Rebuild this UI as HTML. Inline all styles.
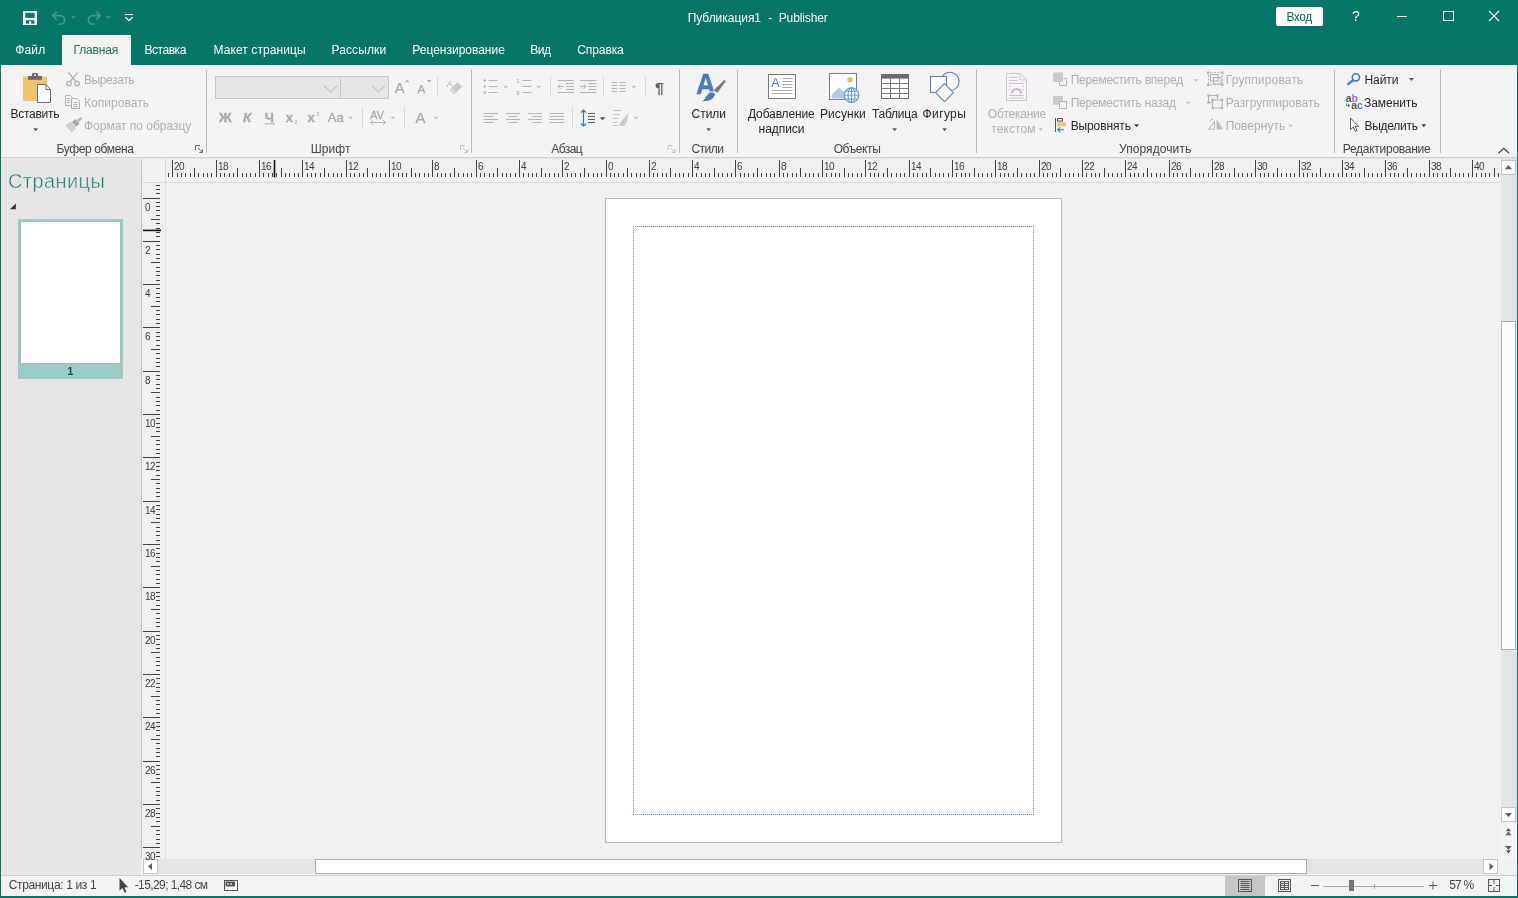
<!DOCTYPE html>
<html lang="ru"><head><meta charset="utf-8"><title>Публикация1 - Publisher</title>
<style>
html,body{margin:0;padding:0}
body{width:1518px;height:898px;overflow:hidden;background:#077568;font-family:"Liberation Sans",sans-serif;font-size:12px;position:relative}
.b{position:absolute}
.t{position:absolute;white-space:pre;line-height:30px;height:30px;font-size:12px}
.g{position:absolute;white-space:pre;line-height:30px;height:30px}
.rl{position:absolute;white-space:pre;font-size:10px;line-height:10px;color:#3c3c3c;letter-spacing:-0.5px}
svg{position:absolute;left:0;top:0}
#hd{position:absolute;left:8px;top:166px;font-size:20px;line-height:30px;color:#1f7c75;white-space:pre;letter-spacing:0.42px;-webkit-text-stroke:0.45px #e6e6e6}
</style></head><body>
<div class="b" style="left:1px;top:65px;width:1516px;height:92px;background:#f3f3f3"></div>
<div class="b" style="left:1px;top:157px;width:1516px;height:1px;background:#cecece"></div>
<div class="b" style="left:1px;top:65px;width:1516px;height:1px;background:#e4f6f4"></div>
<div class="b" style="left:62px;top:35px;width:69px;height:31px;background:#f3f3f3"></div>
<div class="b" style="left:1px;top:158px;width:140px;height:717px;background:#e6e6e6"></div>
<div class="b" style="left:141px;top:158px;width:1376px;height:717px;background:#f0f0f0"></div>
<div class="b" style="left:141px;top:158px;width:1px;height:701px;background:#c4c4c4"></div>
<div class="b" style="left:165px;top:182px;width:1px;height:677px;background:#dddddd"></div>
<div class="b" style="left:141px;top:158px;width:1360px;height:1px;background:#e6e6e6"></div>
<div class="b" style="left:166px;top:179px;width:1334px;height:1px;background:#fafafa"></div>
<div class="b" style="left:141px;top:182px;width:1360px;height:1px;background:#d9d9d9"></div>
<div class="b" style="left:165px;top:158px;width:1px;height:24px;background:#d9d9d9"></div>
<div class="b" style="left:1501px;top:158px;width:16px;height:664px;background:#e4e4e4"></div>
<div class="b" style="left:1501px;top:822px;width:16px;height:37px;background:#f4f4f4"></div>
<div class="b" style="left:143px;top:859px;width:1355px;height:15px;background:#e4e4e4"></div>
<div class="b" style="left:1px;top:876px;width:1516px;height:20px;background:#f3f3f3"></div>
<div class="b" style="left:1px;top:875px;width:1516px;height:1px;background:#cfcfcf"></div>
<svg width="1518" height="898" viewBox="0 0 1518 898">
<g id="qat">
<rect x="23" y="11" width="14" height="14" fill="#fff"/>
<rect x="25.3" y="12.8" width="9.4" height="5" fill="#077568"/>
<rect x="26" y="20.2" width="8.4" height="3.5" fill="#077568"/>
<rect x="29.2" y="21.2" width="2" height="3.8" fill="#fff"/>
<path d="M56.8 11.8 L52.6 15.6 L56.8 19.6 M52.8 15.6 H60.3 a4.3 4.3 0 0 1 0 8.6 H58.5" fill="none" stroke="#3f988c" stroke-width="1.7"/>
<polygon points="71.3,16.3 75.9,16.3 73.6,18.7" fill="#3f988c"/>
<path d="M96.2 11.8 L100.4 15.6 L96.2 19.6 M100.2 15.6 H92.7 a4.3 4.3 0 0 0 0 8.6 H94.5" fill="none" stroke="#3f988c" stroke-width="1.7"/>
<polygon points="106,16.3 110.7,16.3 108.35,18.7" fill="#3f988c"/>
<rect x="125" y="14" width="8" height="1.1" fill="#fff"/>
<path d="M125.4 17.2 L129 20.6 L132.6 17.2" fill="none" stroke="#fff" stroke-width="1.3"/>
</g>
<rect x="1276" y="7" width="47" height="19" rx="2" fill="#fff"/>
<rect x="1397" y="16" width="10" height="1" fill="#fff"/>
<rect x="1443.5" y="11.5" width="10" height="9" fill="none" stroke="#fff" stroke-width="1"/>
<path d="M1489 11 L1499 21 M1499 11 L1489 21" stroke="#fff" stroke-width="1.1" fill="none"/>
<rect x="206.0" y="70" width="1" height="83" fill="#b9b9b9"/>
<rect x="471.0" y="70" width="1" height="83" fill="#b9b9b9"/>
<rect x="679.0" y="70" width="1" height="83" fill="#b9b9b9"/>
<rect x="737.0" y="70" width="1" height="83" fill="#b9b9b9"/>
<rect x="976.0" y="70" width="1" height="83" fill="#b9b9b9"/>
<rect x="1334.0" y="70" width="1" height="83" fill="#b9b9b9"/>
<rect x="1440.0" y="70" width="1" height="83" fill="#b9b9b9"/>
<rect x="437.0" y="77" width="1" height="19" fill="#dadada"/>
<rect x="550.0" y="76" width="1" height="20" fill="#dadada"/>
<rect x="603.0" y="76" width="1" height="20" fill="#dadada"/>
<rect x="645.0" y="76" width="1" height="20" fill="#dadada"/>
<rect x="362.0" y="107" width="1" height="21" fill="#dadada"/>
<rect x="404.0" y="107" width="1" height="21" fill="#dadada"/>
<rect x="572.0" y="107" width="1" height="21" fill="#dadada"/>
<g id="paste">
<rect x="23" y="76.4" width="24" height="24.6" rx="0.8" fill="#efc46f"/>
<rect x="28" y="76" width="14" height="3.8" fill="#6b6b6b"/>
<rect x="32" y="73" width="6" height="4" rx="1" fill="#6b6b6b"/>
<rect x="34.1" y="74.3" width="1.8" height="1.7" fill="#f0e2c0"/>
<path d="M37.5 84.5 H46 L50.5 89.5 V102.5 H37.5 Z" fill="#fff" stroke="#6b6b6b" stroke-width="1"/>
<path d="M46 84.5 V89.5 H50.5" fill="none" stroke="#6b6b6b" stroke-width="1"/>
</g>
<polygon points="33.2,128.3 38,128.3 35.6,131.2" fill="#5a5a5a"/>
<g fill="none" stroke="#b3b3b3" stroke-width="1.3"><path d="M68.3 72.3 L76.3 82 M77.7 72.3 L69.7 82"/><circle cx="69" cy="83.5" r="2.2"/><circle cx="77" cy="83.5" r="2.2"/></g>
<g fill="none" stroke="#b3b3b3" stroke-width="1"><path d="M71 105.5 H65.5 V95.5 H70.5 L72.5 97.5 V98"/><path d="M67 98.5 H70 M67 100.5 H70 M67 102.5 H70"/><path d="M71.5 98.5 H77 L79.5 101 V108.5 H71.5 Z" fill="#f3f3f3"/><path d="M73.5 102.5 H77.5 M73.5 104.5 H77.5 M73.5 106.5 H77.5"/></g>
<g transform="translate(74,124.3) rotate(49)"><rect x="-1.4" y="-10" width="2.8" height="5.5" fill="#bdbdbd"/><rect x="-3.2" y="-4.5" width="6.4" height="4.5" fill="#a9a9a9"/><rect x="-4.6" y="0.8" width="9.2" height="6.5" fill="#cfcfcf"/></g>
<g fill="none" stroke="#6a6a6a" stroke-width="1"><path d="M195.5 150 V145.5 H200"/><path d="M198 148 L202.5 152.5 M202.5 149.3 V152.5 H199.3"/></g>
<g fill="none" stroke="#c0c0c0" stroke-width="1"><path d="M460.5 150 V145.5 H465"/><path d="M463 148 L467.5 152.5 M467.5 149.3 V152.5 H464.3"/></g>
<g fill="none" stroke="#c0c0c0" stroke-width="1"><path d="M668.0 150 V145.5 H672.5"/><path d="M670.5 148 L675.0 152.5 M675.0 149.3 V152.5 H671.8"/></g>
<rect x="215.5" y="76.5" width="125" height="22" fill="#e5e5e5" stroke="#c8c8c8"/>
<rect x="340.5" y="76.5" width="48" height="22" fill="#e5e5e5" stroke="#c8c8c8"/>
<path d="M323.5 85.5 L330.5 92 L337.5 85.5 M372 85.5 L378.5 92 L385 85.5" fill="none" stroke="#b3b3b3" stroke-width="1"/>
<polygon points="405,82.2 407.3,79.5 409.6,82.2" fill="#b3b3b3"/>
<polygon points="426.6,80 431.6,80 429.1,82.8" fill="#b3b3b3"/>
<g transform="translate(455.800,88.400) rotate(-45)"><rect x="-5.500" y="-3.200" width="11" height="6.400" fill="#c9c3c6"/><rect x="-5.500" y="-3.200" width="3.500" height="6.400" fill="#dcd8da"/></g>
<rect x="264.5" y="123.2" width="10.5" height="1.3" fill="#b3b3b3"/>
<polygon points="348.3,116.8 353,116.8 350.65,119.4" fill="#c4c4c4"/>
<path d="M370.5 122.5 H385.5 M373 120 L370.5 122.5 L373 125 M383 120 L385.5 122.5 L383 125" fill="none" stroke="#b3b3b3" stroke-width="1"/>
<polygon points="390.6,116.8 395.2,116.8 392.9,119.4" fill="#c4c4c4"/>
<polygon points="433.6,116.8 438.4,116.8 436.0,119.4" fill="#c4c4c4"/>
<g fill="none" stroke="#b3b3b3" stroke-width="1"><circle cx="484.8" cy="80.5" r="1.2" fill="#b3b3b3" stroke="none"/><path d="M488.5 80.5 H497.5"/><path d="M522.5 80.5 H531.5"/><circle cx="484.8" cy="86.5" r="1.2" fill="#b3b3b3" stroke="none"/><path d="M488.5 86.5 H497.5"/><path d="M522.5 86.5 H531.5"/><circle cx="484.8" cy="92.5" r="1.2" fill="#b3b3b3" stroke="none"/><path d="M488.5 92.5 H497.5"/><path d="M522.5 92.5 H531.5"/><path d="M557.5 80.5 H574 M580 80.5 H596.5"/><path d="M557.5 92.5 H574 M580 92.5 H596.5"/><path d="M566 83.5 H574 M588.5 83.5 H596.5"/><path d="M566 86.5 H574 M588.5 86.5 H596.5"/><path d="M566 89.5 H574 M588.5 89.5 H596.5"/><path d="M558 86.5 H564 M560.5 84 L558 86.5 L560.5 89"/><path d="M580 86.5 H586 M583.5 84 L586 86.5 L583.5 89"/><path d="M611.5 82.5 H617.5 M619.5 82.5 H625.5"/><path d="M611.5 85.5 H617.5 M619.5 85.5 H625.5"/><path d="M611.5 88.5 H617.5 M619.5 88.5 H625.5"/><path d="M611.5 91.5 H617.5 M619.5 91.5 H625.5"/><path d="M483.5 113.5 H498"/><path d="M506 113.5 H520"/><path d="M528 113.5 H542"/><path d="M549.5 113.5 H564"/><path d="M483.5 116.5 H493.5"/><path d="M508.5 116.5 H517.5"/><path d="M532.5 116.5 H542"/><path d="M549.5 116.5 H564"/><path d="M483.5 119.5 H498"/><path d="M506 119.5 H520"/><path d="M528 119.5 H542"/><path d="M549.5 119.5 H564"/><path d="M483.5 122.5 H493.5"/><path d="M508.5 122.5 H517.5"/><path d="M532.5 122.5 H542"/><path d="M549.5 122.5 H564"/></g>
<polygon points="503.3,86 508,86 505.65,88.6" fill="#c4c4c4"/>
<polygon points="536.5,86 541,86 538.75,88.6" fill="#c4c4c4"/>
<polygon points="631.5,86 636,86 633.75,88.6" fill="#c4c4c4"/>
<g fill="none" stroke-width="1"><path d="M583.5 110 V126 M581 112.5 L583.5 110 L586 112.5 M581 123.5 L583.5 126 L586 123.5" stroke="#3e74b0" stroke-width="1.2"/><path d="M588 113.5 H595 M588 116.5 H595 M588 119.5 H595 M588 122.5 H595" stroke="#5a5a5a"/></g>
<polygon points="600,117.2 605.2,117.2 602.6,120.2" fill="#444"/>
<g fill="none" stroke="#c4c4c4" stroke-width="1"><path d="M613.5 110.500 H621 M613 114.5 H620 M613 118.5 H618.5 M613 122.5 H617 M613 125.5 H618"/><path d="M628.5 112.5 L621 122 L618.5 125.8 L624 125.8 L626.8 122.500 Z" fill="#c9c9c9" stroke="none"/></g>
<polygon points="633.5,116.8 638.2,116.8 635.85,119.4" fill="#c4c4c4"/>
<polygon points="706.3,128.3 711,128.3 708.65,131.2" fill="#5a5a5a"/>
<rect x="768.5" y="74.5" width="27" height="24" fill="#fff" stroke="#7a7a7a"/>
<path d="M782.5 78.5 H792.5 M782.5 81.5 H792.5 M782.5 84.5 H792.5 M782.5 87.5 H792.5 M771.5 90.5 H792.5 M771.5 93.5 H792.5" stroke="#a8a8a8" stroke-width="1" fill="none"/>
<rect x="829.5" y="73.5" width="27" height="26" fill="#fff" stroke="#7a7a7a"/>
<circle cx="850" cy="79.8" r="2.7" fill="#e9bd6b"/>
<path d="M831.5 98.5 V95 L838.9 87.300 L843.5 91.500 L846 89.8 L850 93 V98.5 Z" fill="#b7c9e2"/>
<g fill="none" stroke="#6494cb" stroke-width="0.9"><circle cx="851.5" cy="95.2" r="7.300" fill="#f3f7fc" stroke-width="1.15"/><path d="M844.2 95.2 H858.8 M851.5 87.9 V102.5 M845.6 91.300 H857.4 M845.6 99.1 H857.4"/><ellipse cx="851.5" cy="95.2" rx="3.4" ry="7.300"/></g>
<rect x="881.5" y="74.5" width="27" height="24" fill="#fff" stroke="#6b6b6b"/>
<rect x="881" y="74" width="28" height="4.6" fill="#6b6b6b"/>
<path d="M890.5 78.5 V98.5 M899.5 78.5 V98.5 M881.5 83.5 H908.5 M881.5 88.5 H908.5 M881.5 93.5 H908.5" stroke="#7a7a7a" stroke-width="1" fill="none"/>
<polygon points="892.2,128.3 897,128.3 894.6,131.2" fill="#5a5a5a"/>
<g fill="#f9fbfe" stroke="#5f82b0" stroke-width="1.1"><circle cx="950" cy="81.4" r="9.1"/><rect x="930.5" y="76.500" width="16" height="16"/><path d="M944.5 83.6 L953.3 92.600 L944.5 101.600 L935.7 92.600 Z"/></g>
<polygon points="942.2,128.3 947,128.3 944.6,131.2" fill="#5a5a5a"/>
<g fill="none" stroke="#cbc5cb" stroke-width="1"><path d="M1006.5 73.500 H1020 L1026.5 80 V100.5 H1006.5 Z" fill="#f6f4f6"/><path d="M1020 73.5 V80 H1026.5"/><path d="M1009 77.5 H1017.5 M1009 80.5 H1017.500 M1009 83.5 H1024 M1009 86.5 H1011 M1022 86.5 H1024 M1009 89.5 H1010.5 M1022.5 89.5 H1024 M1009 95.5 H1024 M1009 98 H1024"/><path d="M1012 93.5 A4.5 4.5 0 0 1 1021 93.500" stroke-width="2.2" stroke="#c4bcc4"/></g>
<polygon points="1038.3,128.3 1043,128.3 1040.65,131" fill="#c4c4c4"/>
<rect x="1053" y="72.500" width="10" height="9.4" fill="#cacaca"/><path d="M1063.500 78.500 H1066.5 V85.5 H1059.5 V82.4" fill="none" stroke="#b3b3b3"/>
<rect x="1053" y="96" width="10" height="8.8" fill="#cacaca"/><rect x="1059.5" y="101.5" width="7" height="7" fill="#f3f3f3" stroke="#b3b3b3"/>
<polygon points="1193.7,79.2 1198.7,79.2 1196.2,82" fill="#c4c4c4"/>
<polygon points="1185.8,101.7 1190.8,101.7 1188.3,104.5" fill="#c4c4c4"/>
<path d="M1055.5 118 V132" stroke="#555" fill="none"/><rect x="1057.5" y="118.5" width="5" height="2.5" fill="#fff" stroke="#555"/><rect x="1057" y="122.200" width="9" height="4.2" fill="#e8c77a"/><path d="M1057.800 129.700 H1064 M1060.200 127.300 L1057.800 129.700 L1060.200 132.100" fill="none" stroke="#3e74b0" stroke-width="1.1"/>
<polygon points="1134,124.2 1139.2,124.2 1136.6,127.2" fill="#444"/>
<g fill="none" stroke="#b3b3b3" stroke-width="1"><rect x="1210.500" y="74.5" width="7.5" height="6.5"/><rect x="1213.5" y="77.500" width="7.5" height="6.5"/><path d="M1208.5 75 V83 M1222.500 75 V83 M1210.500 72.500 H1220.500 M1210.500 84.5 H1220.500" stroke-dasharray="2 1.500"/></g>
<rect x="1207" y="71.5" width="2.5" height="2.500" fill="#b3b3b3"/>
<rect x="1221" y="71.5" width="2.5" height="2.500" fill="#b3b3b3"/>
<rect x="1207" y="83.5" width="2.5" height="2.500" fill="#b3b3b3"/>
<rect x="1221" y="83.5" width="2.5" height="2.500" fill="#b3b3b3"/>
<g fill="none" stroke="#b3b3b3" stroke-width="1"><rect x="1208.500" y="95.5" width="9" height="7"/><rect x="1212.500" y="100" width="9.5" height="8" fill="#f3f3f3"/></g>
<rect x="1207.3" y="94.3" width="2.4" height="2.400" fill="#b3b3b3"/>
<rect x="1216.3" y="94.3" width="2.4" height="2.400" fill="#b3b3b3"/>
<rect x="1207.3" y="101.3" width="2.4" height="2.400" fill="#b3b3b3"/>
<rect x="1211.3" y="98.8" width="2.4" height="2.400" fill="#b3b3b3"/>
<rect x="1220.8" y="98.8" width="2.4" height="2.400" fill="#b3b3b3"/>
<rect x="1211.3" y="106.8" width="2.4" height="2.400" fill="#b3b3b3"/>
<rect x="1220.8" y="106.8" width="2.4" height="2.400" fill="#b3b3b3"/>
<path d="M1208.500 129.200 H1214.500 V121.500 Z" fill="none" stroke="#b3b3b3"/><path d="M1216.500 118.700 V129.600 H1223.200 Z" fill="#bdbdbd"/><path d="M1209.500 121.500 A4 4 0 0 1 1213 119.200" fill="none" stroke="#b3b3b3"/>
<polygon points="1288,124.5 1293,124.5 1290.5,127.3" fill="#c4c4c4"/>
<path d="M1353.200 80.200 L1348.200 84" stroke="#5c7fa8" stroke-width="2.6" stroke-linecap="round" fill="none"/><circle cx="1355.900" cy="77.300" r="3.600" fill="#eef3fa" stroke="#4a78b0" stroke-width="1.600"/>
<polygon points="1408.9,78 1414,78 1411.45,81" fill="#5a5a5a"/>
<path d="M1346.500 103.500 V105.500 H1349.500 M1348 104 L1349.800 105.500 L1348 107" fill="none" stroke="#4a78b0" stroke-width="1"/>
<path d="M1350.500 118 V129.600 L1353.300 127.100 L1355.300 131.400 L1357.100 130.600 L1355.100 126.400 H1358.600 Z" fill="#fff" stroke="#555" stroke-width="1"/>
<polygon points="1421.4,124.2 1426.3,124.2 1423.85,127.2" fill="#444"/>
<path d="M1498.500 153.200 L1503.800 148.200 L1509.100 153.200" fill="none" stroke="#444" stroke-width="1.200"/>
<polygon points="15.8,203.400 15.8,209.200 10,209.200" fill="#333"/>
<rect x="18" y="219" width="105" height="160" fill="#9ccbc6"/>
<rect x="20.500" y="221.500" width="100" height="142" fill="#fff" stroke="#a3bcb9"/>
<g fill="#404040"><rect x="168" y="173" width="1" height="4"/><rect x="172" y="160" width="1" height="17"/><rect x="177" y="173" width="1" height="4"/><rect x="181" y="173" width="1" height="4"/><rect x="185" y="173" width="1" height="4"/><rect x="190" y="173" width="1" height="4"/><rect x="194" y="168" width="1" height="9"/><rect x="198" y="173" width="1" height="4"/><rect x="203" y="173" width="1" height="4"/><rect x="207" y="173" width="1" height="4"/><rect x="211" y="173" width="1" height="4"/><rect x="216" y="160" width="1" height="17"/><rect x="220" y="173" width="1" height="4"/><rect x="224" y="173" width="1" height="4"/><rect x="229" y="173" width="1" height="4"/><rect x="233" y="173" width="1" height="4"/><rect x="237" y="168" width="1" height="9"/><rect x="242" y="173" width="1" height="4"/><rect x="246" y="173" width="1" height="4"/><rect x="250" y="173" width="1" height="4"/><rect x="255" y="173" width="1" height="4"/><rect x="259" y="160" width="1" height="17"/><rect x="263" y="173" width="1" height="4"/><rect x="268" y="173" width="1" height="4"/><rect x="272" y="173" width="1" height="4"/><rect x="276" y="173" width="1" height="4"/><rect x="281" y="168" width="1" height="9"/><rect x="285" y="173" width="1" height="4"/><rect x="289" y="173" width="1" height="4"/><rect x="294" y="173" width="1" height="4"/><rect x="298" y="173" width="1" height="4"/><rect x="302" y="160" width="1" height="17"/><rect x="307" y="173" width="1" height="4"/><rect x="311" y="173" width="1" height="4"/><rect x="315" y="173" width="1" height="4"/><rect x="320" y="173" width="1" height="4"/><rect x="324" y="168" width="1" height="9"/><rect x="328" y="173" width="1" height="4"/><rect x="333" y="173" width="1" height="4"/><rect x="337" y="173" width="1" height="4"/><rect x="341" y="173" width="1" height="4"/><rect x="346" y="160" width="1" height="17"/><rect x="350" y="173" width="1" height="4"/><rect x="354" y="173" width="1" height="4"/><rect x="359" y="173" width="1" height="4"/><rect x="363" y="173" width="1" height="4"/><rect x="367" y="168" width="1" height="9"/><rect x="372" y="173" width="1" height="4"/><rect x="376" y="173" width="1" height="4"/><rect x="380" y="173" width="1" height="4"/><rect x="385" y="173" width="1" height="4"/><rect x="389" y="160" width="1" height="17"/><rect x="393" y="173" width="1" height="4"/><rect x="398" y="173" width="1" height="4"/><rect x="402" y="173" width="1" height="4"/><rect x="406" y="173" width="1" height="4"/><rect x="411" y="168" width="1" height="9"/><rect x="415" y="173" width="1" height="4"/><rect x="419" y="173" width="1" height="4"/><rect x="424" y="173" width="1" height="4"/><rect x="428" y="173" width="1" height="4"/><rect x="432" y="160" width="1" height="17"/><rect x="437" y="173" width="1" height="4"/><rect x="441" y="173" width="1" height="4"/><rect x="445" y="173" width="1" height="4"/><rect x="450" y="173" width="1" height="4"/><rect x="454" y="168" width="1" height="9"/><rect x="458" y="173" width="1" height="4"/><rect x="463" y="173" width="1" height="4"/><rect x="467" y="173" width="1" height="4"/><rect x="471" y="173" width="1" height="4"/><rect x="476" y="160" width="1" height="17"/><rect x="480" y="173" width="1" height="4"/><rect x="484" y="173" width="1" height="4"/><rect x="489" y="173" width="1" height="4"/><rect x="493" y="173" width="1" height="4"/><rect x="497" y="168" width="1" height="9"/><rect x="502" y="173" width="1" height="4"/><rect x="506" y="173" width="1" height="4"/><rect x="510" y="173" width="1" height="4"/><rect x="515" y="173" width="1" height="4"/><rect x="519" y="160" width="1" height="17"/><rect x="523" y="173" width="1" height="4"/><rect x="528" y="173" width="1" height="4"/><rect x="532" y="173" width="1" height="4"/><rect x="536" y="173" width="1" height="4"/><rect x="541" y="168" width="1" height="9"/><rect x="545" y="173" width="1" height="4"/><rect x="549" y="173" width="1" height="4"/><rect x="554" y="173" width="1" height="4"/><rect x="558" y="173" width="1" height="4"/><rect x="562" y="160" width="1" height="17"/><rect x="567" y="173" width="1" height="4"/><rect x="571" y="173" width="1" height="4"/><rect x="575" y="173" width="1" height="4"/><rect x="580" y="173" width="1" height="4"/><rect x="584" y="168" width="1" height="9"/><rect x="588" y="173" width="1" height="4"/><rect x="593" y="173" width="1" height="4"/><rect x="597" y="173" width="1" height="4"/><rect x="601" y="173" width="1" height="4"/><rect x="606" y="160" width="1" height="17"/><rect x="610" y="173" width="1" height="4"/><rect x="614" y="173" width="1" height="4"/><rect x="618" y="173" width="1" height="4"/><rect x="623" y="173" width="1" height="4"/><rect x="627" y="168" width="1" height="9"/><rect x="631" y="173" width="1" height="4"/><rect x="636" y="173" width="1" height="4"/><rect x="640" y="173" width="1" height="4"/><rect x="644" y="173" width="1" height="4"/><rect x="649" y="160" width="1" height="17"/><rect x="653" y="173" width="1" height="4"/><rect x="657" y="173" width="1" height="4"/><rect x="662" y="173" width="1" height="4"/><rect x="666" y="173" width="1" height="4"/><rect x="670" y="168" width="1" height="9"/><rect x="675" y="173" width="1" height="4"/><rect x="679" y="173" width="1" height="4"/><rect x="683" y="173" width="1" height="4"/><rect x="688" y="173" width="1" height="4"/><rect x="692" y="160" width="1" height="17"/><rect x="696" y="173" width="1" height="4"/><rect x="701" y="173" width="1" height="4"/><rect x="705" y="173" width="1" height="4"/><rect x="709" y="173" width="1" height="4"/><rect x="714" y="168" width="1" height="9"/><rect x="718" y="173" width="1" height="4"/><rect x="722" y="173" width="1" height="4"/><rect x="727" y="173" width="1" height="4"/><rect x="731" y="173" width="1" height="4"/><rect x="735" y="160" width="1" height="17"/><rect x="740" y="173" width="1" height="4"/><rect x="744" y="173" width="1" height="4"/><rect x="748" y="173" width="1" height="4"/><rect x="753" y="173" width="1" height="4"/><rect x="757" y="168" width="1" height="9"/><rect x="761" y="173" width="1" height="4"/><rect x="766" y="173" width="1" height="4"/><rect x="770" y="173" width="1" height="4"/><rect x="774" y="173" width="1" height="4"/><rect x="779" y="160" width="1" height="17"/><rect x="783" y="173" width="1" height="4"/><rect x="787" y="173" width="1" height="4"/><rect x="792" y="173" width="1" height="4"/><rect x="796" y="173" width="1" height="4"/><rect x="800" y="168" width="1" height="9"/><rect x="805" y="173" width="1" height="4"/><rect x="809" y="173" width="1" height="4"/><rect x="813" y="173" width="1" height="4"/><rect x="818" y="173" width="1" height="4"/><rect x="822" y="160" width="1" height="17"/><rect x="826" y="173" width="1" height="4"/><rect x="831" y="173" width="1" height="4"/><rect x="835" y="173" width="1" height="4"/><rect x="839" y="173" width="1" height="4"/><rect x="844" y="168" width="1" height="9"/><rect x="848" y="173" width="1" height="4"/><rect x="852" y="173" width="1" height="4"/><rect x="857" y="173" width="1" height="4"/><rect x="861" y="173" width="1" height="4"/><rect x="865" y="160" width="1" height="17"/><rect x="870" y="173" width="1" height="4"/><rect x="874" y="173" width="1" height="4"/><rect x="878" y="173" width="1" height="4"/><rect x="883" y="173" width="1" height="4"/><rect x="887" y="168" width="1" height="9"/><rect x="891" y="173" width="1" height="4"/><rect x="896" y="173" width="1" height="4"/><rect x="900" y="173" width="1" height="4"/><rect x="904" y="173" width="1" height="4"/><rect x="909" y="160" width="1" height="17"/><rect x="913" y="173" width="1" height="4"/><rect x="917" y="173" width="1" height="4"/><rect x="922" y="173" width="1" height="4"/><rect x="926" y="173" width="1" height="4"/><rect x="930" y="168" width="1" height="9"/><rect x="935" y="173" width="1" height="4"/><rect x="939" y="173" width="1" height="4"/><rect x="943" y="173" width="1" height="4"/><rect x="948" y="173" width="1" height="4"/><rect x="952" y="160" width="1" height="17"/><rect x="956" y="173" width="1" height="4"/><rect x="961" y="173" width="1" height="4"/><rect x="965" y="173" width="1" height="4"/><rect x="969" y="173" width="1" height="4"/><rect x="974" y="168" width="1" height="9"/><rect x="978" y="173" width="1" height="4"/><rect x="982" y="173" width="1" height="4"/><rect x="987" y="173" width="1" height="4"/><rect x="991" y="173" width="1" height="4"/><rect x="995" y="160" width="1" height="17"/><rect x="1000" y="173" width="1" height="4"/><rect x="1004" y="173" width="1" height="4"/><rect x="1008" y="173" width="1" height="4"/><rect x="1013" y="173" width="1" height="4"/><rect x="1017" y="168" width="1" height="9"/><rect x="1021" y="173" width="1" height="4"/><rect x="1026" y="173" width="1" height="4"/><rect x="1030" y="173" width="1" height="4"/><rect x="1034" y="173" width="1" height="4"/><rect x="1039" y="160" width="1" height="17"/><rect x="1043" y="173" width="1" height="4"/><rect x="1047" y="173" width="1" height="4"/><rect x="1052" y="173" width="1" height="4"/><rect x="1056" y="173" width="1" height="4"/><rect x="1060" y="168" width="1" height="9"/><rect x="1065" y="173" width="1" height="4"/><rect x="1069" y="173" width="1" height="4"/><rect x="1073" y="173" width="1" height="4"/><rect x="1078" y="173" width="1" height="4"/><rect x="1082" y="160" width="1" height="17"/><rect x="1086" y="173" width="1" height="4"/><rect x="1091" y="173" width="1" height="4"/><rect x="1095" y="173" width="1" height="4"/><rect x="1099" y="173" width="1" height="4"/><rect x="1104" y="168" width="1" height="9"/><rect x="1108" y="173" width="1" height="4"/><rect x="1112" y="173" width="1" height="4"/><rect x="1117" y="173" width="1" height="4"/><rect x="1121" y="173" width="1" height="4"/><rect x="1125" y="160" width="1" height="17"/><rect x="1130" y="173" width="1" height="4"/><rect x="1134" y="173" width="1" height="4"/><rect x="1138" y="173" width="1" height="4"/><rect x="1143" y="173" width="1" height="4"/><rect x="1147" y="168" width="1" height="9"/><rect x="1151" y="173" width="1" height="4"/><rect x="1156" y="173" width="1" height="4"/><rect x="1160" y="173" width="1" height="4"/><rect x="1164" y="173" width="1" height="4"/><rect x="1169" y="160" width="1" height="17"/><rect x="1173" y="173" width="1" height="4"/><rect x="1177" y="173" width="1" height="4"/><rect x="1182" y="173" width="1" height="4"/><rect x="1186" y="173" width="1" height="4"/><rect x="1190" y="168" width="1" height="9"/><rect x="1195" y="173" width="1" height="4"/><rect x="1199" y="173" width="1" height="4"/><rect x="1203" y="173" width="1" height="4"/><rect x="1208" y="173" width="1" height="4"/><rect x="1212" y="160" width="1" height="17"/><rect x="1216" y="173" width="1" height="4"/><rect x="1221" y="173" width="1" height="4"/><rect x="1225" y="173" width="1" height="4"/><rect x="1229" y="173" width="1" height="4"/><rect x="1234" y="168" width="1" height="9"/><rect x="1238" y="173" width="1" height="4"/><rect x="1242" y="173" width="1" height="4"/><rect x="1247" y="173" width="1" height="4"/><rect x="1251" y="173" width="1" height="4"/><rect x="1255" y="160" width="1" height="17"/><rect x="1260" y="173" width="1" height="4"/><rect x="1264" y="173" width="1" height="4"/><rect x="1268" y="173" width="1" height="4"/><rect x="1273" y="173" width="1" height="4"/><rect x="1277" y="168" width="1" height="9"/><rect x="1281" y="173" width="1" height="4"/><rect x="1286" y="173" width="1" height="4"/><rect x="1290" y="173" width="1" height="4"/><rect x="1294" y="173" width="1" height="4"/><rect x="1299" y="160" width="1" height="17"/><rect x="1303" y="173" width="1" height="4"/><rect x="1307" y="173" width="1" height="4"/><rect x="1312" y="173" width="1" height="4"/><rect x="1316" y="173" width="1" height="4"/><rect x="1320" y="168" width="1" height="9"/><rect x="1325" y="173" width="1" height="4"/><rect x="1329" y="173" width="1" height="4"/><rect x="1333" y="173" width="1" height="4"/><rect x="1338" y="173" width="1" height="4"/><rect x="1342" y="160" width="1" height="17"/><rect x="1346" y="173" width="1" height="4"/><rect x="1351" y="173" width="1" height="4"/><rect x="1355" y="173" width="1" height="4"/><rect x="1359" y="173" width="1" height="4"/><rect x="1364" y="168" width="1" height="9"/><rect x="1368" y="173" width="1" height="4"/><rect x="1372" y="173" width="1" height="4"/><rect x="1377" y="173" width="1" height="4"/><rect x="1381" y="173" width="1" height="4"/><rect x="1385" y="160" width="1" height="17"/><rect x="1390" y="173" width="1" height="4"/><rect x="1394" y="173" width="1" height="4"/><rect x="1398" y="173" width="1" height="4"/><rect x="1403" y="173" width="1" height="4"/><rect x="1407" y="168" width="1" height="9"/><rect x="1411" y="173" width="1" height="4"/><rect x="1416" y="173" width="1" height="4"/><rect x="1420" y="173" width="1" height="4"/><rect x="1424" y="173" width="1" height="4"/><rect x="1429" y="160" width="1" height="17"/><rect x="1433" y="173" width="1" height="4"/><rect x="1437" y="173" width="1" height="4"/><rect x="1442" y="173" width="1" height="4"/><rect x="1446" y="173" width="1" height="4"/><rect x="1450" y="168" width="1" height="9"/><rect x="1455" y="173" width="1" height="4"/><rect x="1459" y="173" width="1" height="4"/><rect x="1463" y="173" width="1" height="4"/><rect x="1468" y="173" width="1" height="4"/><rect x="1472" y="160" width="1" height="17"/><rect x="1476" y="173" width="1" height="4"/><rect x="1481" y="173" width="1" height="4"/><rect x="1485" y="173" width="1" height="4"/><rect x="1489" y="173" width="1" height="4"/><rect x="1494" y="168" width="1" height="9"/><rect x="1498" y="173" width="1" height="4"/><rect x="156" y="185" width="4" height="1"/><rect x="156" y="189" width="4" height="1"/><rect x="156" y="193" width="4" height="1"/><rect x="143" y="198" width="17" height="1"/><rect x="156" y="202" width="4" height="1"/><rect x="156" y="206" width="4" height="1"/><rect x="156" y="210" width="4" height="1"/><rect x="156" y="215" width="4" height="1"/><rect x="151" y="219" width="9" height="1"/><rect x="156" y="223" width="4" height="1"/><rect x="156" y="228" width="4" height="1"/><rect x="156" y="232" width="4" height="1"/><rect x="156" y="236" width="4" height="1"/><rect x="143" y="241" width="17" height="1"/><rect x="156" y="245" width="4" height="1"/><rect x="156" y="249" width="4" height="1"/><rect x="156" y="254" width="4" height="1"/><rect x="156" y="258" width="4" height="1"/><rect x="151" y="262" width="9" height="1"/><rect x="156" y="267" width="4" height="1"/><rect x="156" y="271" width="4" height="1"/><rect x="156" y="275" width="4" height="1"/><rect x="156" y="280" width="4" height="1"/><rect x="143" y="284" width="17" height="1"/><rect x="156" y="288" width="4" height="1"/><rect x="156" y="293" width="4" height="1"/><rect x="156" y="297" width="4" height="1"/><rect x="156" y="301" width="4" height="1"/><rect x="151" y="306" width="9" height="1"/><rect x="156" y="310" width="4" height="1"/><rect x="156" y="314" width="4" height="1"/><rect x="156" y="319" width="4" height="1"/><rect x="156" y="323" width="4" height="1"/><rect x="143" y="327" width="17" height="1"/><rect x="156" y="332" width="4" height="1"/><rect x="156" y="336" width="4" height="1"/><rect x="156" y="340" width="4" height="1"/><rect x="156" y="345" width="4" height="1"/><rect x="151" y="349" width="9" height="1"/><rect x="156" y="353" width="4" height="1"/><rect x="156" y="358" width="4" height="1"/><rect x="156" y="362" width="4" height="1"/><rect x="156" y="366" width="4" height="1"/><rect x="143" y="371" width="17" height="1"/><rect x="156" y="375" width="4" height="1"/><rect x="156" y="379" width="4" height="1"/><rect x="156" y="384" width="4" height="1"/><rect x="156" y="388" width="4" height="1"/><rect x="151" y="392" width="9" height="1"/><rect x="156" y="397" width="4" height="1"/><rect x="156" y="401" width="4" height="1"/><rect x="156" y="405" width="4" height="1"/><rect x="156" y="410" width="4" height="1"/><rect x="143" y="414" width="17" height="1"/><rect x="156" y="418" width="4" height="1"/><rect x="156" y="423" width="4" height="1"/><rect x="156" y="427" width="4" height="1"/><rect x="156" y="431" width="4" height="1"/><rect x="151" y="436" width="9" height="1"/><rect x="156" y="440" width="4" height="1"/><rect x="156" y="444" width="4" height="1"/><rect x="156" y="449" width="4" height="1"/><rect x="156" y="453" width="4" height="1"/><rect x="143" y="457" width="17" height="1"/><rect x="156" y="462" width="4" height="1"/><rect x="156" y="466" width="4" height="1"/><rect x="156" y="470" width="4" height="1"/><rect x="156" y="475" width="4" height="1"/><rect x="151" y="479" width="9" height="1"/><rect x="156" y="483" width="4" height="1"/><rect x="156" y="488" width="4" height="1"/><rect x="156" y="492" width="4" height="1"/><rect x="156" y="496" width="4" height="1"/><rect x="143" y="501" width="17" height="1"/><rect x="156" y="505" width="4" height="1"/><rect x="156" y="509" width="4" height="1"/><rect x="156" y="514" width="4" height="1"/><rect x="156" y="518" width="4" height="1"/><rect x="151" y="522" width="9" height="1"/><rect x="156" y="527" width="4" height="1"/><rect x="156" y="531" width="4" height="1"/><rect x="156" y="535" width="4" height="1"/><rect x="156" y="540" width="4" height="1"/><rect x="143" y="544" width="17" height="1"/><rect x="156" y="548" width="4" height="1"/><rect x="156" y="553" width="4" height="1"/><rect x="156" y="557" width="4" height="1"/><rect x="156" y="561" width="4" height="1"/><rect x="151" y="566" width="9" height="1"/><rect x="156" y="570" width="4" height="1"/><rect x="156" y="574" width="4" height="1"/><rect x="156" y="579" width="4" height="1"/><rect x="156" y="583" width="4" height="1"/><rect x="143" y="587" width="17" height="1"/><rect x="156" y="592" width="4" height="1"/><rect x="156" y="596" width="4" height="1"/><rect x="156" y="600" width="4" height="1"/><rect x="156" y="605" width="4" height="1"/><rect x="151" y="609" width="9" height="1"/><rect x="156" y="613" width="4" height="1"/><rect x="156" y="618" width="4" height="1"/><rect x="156" y="622" width="4" height="1"/><rect x="156" y="626" width="4" height="1"/><rect x="143" y="631" width="17" height="1"/><rect x="156" y="635" width="4" height="1"/><rect x="156" y="639" width="4" height="1"/><rect x="156" y="644" width="4" height="1"/><rect x="156" y="648" width="4" height="1"/><rect x="151" y="652" width="9" height="1"/><rect x="156" y="657" width="4" height="1"/><rect x="156" y="661" width="4" height="1"/><rect x="156" y="665" width="4" height="1"/><rect x="156" y="670" width="4" height="1"/><rect x="143" y="674" width="17" height="1"/><rect x="156" y="678" width="4" height="1"/><rect x="156" y="683" width="4" height="1"/><rect x="156" y="687" width="4" height="1"/><rect x="156" y="691" width="4" height="1"/><rect x="151" y="696" width="9" height="1"/><rect x="156" y="700" width="4" height="1"/><rect x="156" y="704" width="4" height="1"/><rect x="156" y="709" width="4" height="1"/><rect x="156" y="713" width="4" height="1"/><rect x="143" y="717" width="17" height="1"/><rect x="156" y="722" width="4" height="1"/><rect x="156" y="726" width="4" height="1"/><rect x="156" y="730" width="4" height="1"/><rect x="156" y="735" width="4" height="1"/><rect x="151" y="739" width="9" height="1"/><rect x="156" y="743" width="4" height="1"/><rect x="156" y="748" width="4" height="1"/><rect x="156" y="752" width="4" height="1"/><rect x="156" y="756" width="4" height="1"/><rect x="143" y="761" width="17" height="1"/><rect x="156" y="765" width="4" height="1"/><rect x="156" y="769" width="4" height="1"/><rect x="156" y="774" width="4" height="1"/><rect x="156" y="778" width="4" height="1"/><rect x="151" y="782" width="9" height="1"/><rect x="156" y="787" width="4" height="1"/><rect x="156" y="791" width="4" height="1"/><rect x="156" y="795" width="4" height="1"/><rect x="156" y="800" width="4" height="1"/><rect x="143" y="804" width="17" height="1"/><rect x="156" y="808" width="4" height="1"/><rect x="156" y="813" width="4" height="1"/><rect x="156" y="817" width="4" height="1"/><rect x="156" y="821" width="4" height="1"/><rect x="151" y="826" width="9" height="1"/><rect x="156" y="830" width="4" height="1"/><rect x="156" y="834" width="4" height="1"/><rect x="156" y="839" width="4" height="1"/><rect x="156" y="843" width="4" height="1"/><rect x="143" y="847" width="17" height="1"/><rect x="156" y="852" width="4" height="1"/><rect x="156" y="856" width="4" height="1"/></g>
<rect x="273.700" y="160" width="1.600" height="17.500" fill="#111"/>
<rect x="143" y="229.600" width="18" height="1.600" fill="#111"/>
<rect x="605.5" y="198.5" width="456" height="644" fill="#fff" stroke="#b6b6b6"/>
<rect x="633.500" y="226.500" width="400" height="588" fill="none" stroke="#e4eef6"/>
<path d="M633 226.5 H1034 M633 814.500 H1034 M633.500 226 V815 M1033.500 226 V815" fill="none" stroke="#8499b3" stroke-width="1" stroke-dasharray="1 1" shape-rendering="crispEdges"/>
<rect x="1501.500" y="160.500" width="14" height="14" fill="#fff" stroke="#c4c4c4"/><polygon points="1504.800,169.200 1508.400,165 1512,169.200" fill="#5e5e5e"/>
<rect x="1501.500" y="321.500" width="14" height="328" fill="#fff" stroke="#ababab"/>
<rect x="1501.500" y="807.500" width="14" height="14" fill="#fff" stroke="#c4c4c4"/><polygon points="1505,813 1512,813 1508.500,817" fill="#5e5e5e"/>
<g fill="#5e5e5e"><polygon points="1505.800,831.200 1508.400,828 1511,831.200"/><polygon points="1505.800,834.600 1508.400,831.400 1511,834.600"/><rect x="1505.500" y="834.300" width="5.800" height="1"/><polygon points="1505.800,846.800 1511,846.800 1508.400,850"/><polygon points="1505.800,850.200 1511,850.200 1508.400,853.400"/><rect x="1505.500" y="846" width="5.800" height="1"/></g>
<rect x="143.500" y="859.500" width="14" height="14" fill="#fff" stroke="#c4c4c4"/><polygon points="152,863 152,870.200 148,866.600" fill="#5e5e5e"/>
<rect x="315.500" y="859.500" width="991" height="14" fill="#fff" stroke="#ababab"/>
<rect x="1483.500" y="859.500" width="14" height="14" fill="#fff" stroke="#c4c4c4"/><polygon points="1489.500,863 1489.500,870.200 1493.500,866.600" fill="#5e5e5e"/>
<path d="M119.500 878 V890.600 L122.500 888 L124.800 892.800 L126.600 891.900 L124.400 887.300 H128.200 Z" fill="#444"/>
<rect x="224.500" y="880.500" width="13" height="10" fill="#fff" stroke="#555"/><rect x="225.500" y="881.500" width="9.500" height="5" fill="#555"/><path d="M227 883 L229 885 M229 883 L227 885 M230 883 L232 885 M232 883 L230 885" stroke="#ddd" stroke-width="0.700" fill="none"/>
<rect x="1225" y="876" width="40" height="20" fill="#c6c6c6"/>
<g fill="none" stroke="#555" stroke-width="1"><rect x="1238.500" y="879.500" width="13" height="12"/><path d="M1240.500 881.500 H1249.500 M1240.500 883.500 H1249.500 M1240.500 885.500 H1249.500 M1240.500 887.500 H1249.500 M1240.500 889.500 H1249.500"/><rect x="1278.500" y="879.500" width="12" height="12"/><rect x="1280.500" y="881.500" width="8" height="8"/><path d="M1284.500 881.500 V889.500 M1280.500 883.500 H1288.500 M1280.500 885.500 H1288.500 M1280.500 887.500 H1288.500"/><rect x="1488.500" y="879.500" width="11" height="12"/><path d="M1494 880 V884 M1494 887 V891 M1489 885.500 H1492 M1496 885.500 H1499"/></g>
<rect x="1311" y="885" width="8" height="1" fill="#555"/>
<rect x="1323" y="886" width="101" height="1" fill="#a6a6a6"/><rect x="1374" y="884" width="1" height="5" fill="#a6a6a6"/>
<rect x="1349" y="880" width="5" height="11" fill="#737373"/>
<rect x="1429" y="885" width="8" height="1" fill="#555"/><rect x="1432.500" y="881.500" width="1" height="8" fill="#555"/>
</svg>
<div id="txt" style="position:absolute;left:0;top:0;width:1518px;height:898px;will-change:transform">
<div id="hd">Страницы</div>
<span class="t" style="left:687.7px;top:2.7px;color:#ffffff;letter-spacing:-0.040px;">Публикация1</span>
<span class="t" style="left:768.3px;top:2.7px;color:#ffffff;letter-spacing:0.000px;">-</span>
<span class="t" style="left:778.7px;top:2.7px;color:#ffffff;letter-spacing:-0.113px;">Publisher</span>
<span class="t" style="left:1286.5px;top:1.8px;color:#0b6a5e;letter-spacing:-0.500px;">Вход</span>
<span class="t" style="left:15.2px;top:35.2px;color:#ffffff;letter-spacing:0.167px;">Файл</span>
<span class="t" style="left:73.5px;top:35.2px;color:#1f6f64;letter-spacing:-0.167px;">Главная</span>
<span class="t" style="left:144.5px;top:35.2px;color:#ffffff;letter-spacing:-0.467px;">Вставка</span>
<span class="t" style="left:213.5px;top:35.2px;color:#ffffff;letter-spacing:0.092px;">Макет страницы</span>
<span class="t" style="left:331.5px;top:35.2px;color:#ffffff;letter-spacing:0.114px;">Рассылки</span>
<span class="t" style="left:412.3px;top:35.2px;color:#ffffff;letter-spacing:-0.008px;">Рецензирование</span>
<span class="t" style="left:530.3px;top:35.2px;color:#ffffff;letter-spacing:-0.500px;">Вид</span>
<span class="t" style="left:577.3px;top:35.2px;color:#ffffff;letter-spacing:-0.100px;">Справка</span>
<span class="t" style="left:10.6px;top:98.7px;color:#262626;letter-spacing:-0.286px;">Вставить</span>
<span class="t" style="left:84.0px;top:64.7px;color:#b0b0b0;letter-spacing:-0.400px;">Вырезать</span>
<span class="t" style="left:84.0px;top:88.0px;color:#b0b0b0;letter-spacing:0.033px;">Копировать</span>
<span class="t" style="left:84.0px;top:110.7px;color:#b0b0b0;letter-spacing:-0.019px;">Формат по образцу</span>
<span class="t" style="left:56.5px;top:133.8px;color:#444444;letter-spacing:-0.382px;">Буфер обмена</span>
<span class="t" style="left:310.7px;top:133.8px;color:#444444;letter-spacing:0.075px;">Шрифт</span>
<span class="t" style="left:551.3px;top:133.8px;color:#444444;letter-spacing:-0.575px;">Абзац</span>
<span class="t" style="left:691.6px;top:98.7px;color:#262626;letter-spacing:-0.050px;">Стили</span>
<span class="t" style="left:691.5px;top:133.8px;color:#444444;letter-spacing:-0.550px;">Стили</span>
<span class="t" style="left:748.0px;top:98.7px;color:#262626;letter-spacing:-0.144px;">Добавление</span>
<span class="t" style="left:758.6px;top:114.3px;color:#262626;letter-spacing:-0.067px;">надписи</span>
<span class="t" style="left:820.0px;top:98.7px;color:#262626;letter-spacing:0.067px;">Рисунки</span>
<span class="t" style="left:872.0px;top:98.7px;color:#262626;letter-spacing:-0.233px;">Таблица</span>
<span class="t" style="left:922.6px;top:98.7px;color:#262626;letter-spacing:0.360px;">Фигуры</span>
<span class="t" style="left:833.7px;top:133.8px;color:#444444;letter-spacing:-0.400px;">Объекты</span>
<span class="t" style="left:987.8px;top:98.7px;color:#b0b0b0;letter-spacing:-0.250px;">Обтекание</span>
<span class="t" style="left:991.3px;top:114.3px;color:#b0b0b0;letter-spacing:0.100px;">текстом</span>
<span class="t" style="left:1070.7px;top:64.7px;color:#b0b0b0;letter-spacing:-0.235px;">Переместить вперед</span>
<span class="t" style="left:1070.7px;top:88.0px;color:#b0b0b0;letter-spacing:-0.244px;">Переместить назад</span>
<span class="t" style="left:1070.7px;top:110.8px;color:#262626;letter-spacing:-0.125px;">Выровнять</span>
<span class="t" style="left:1225.7px;top:64.7px;color:#b0b0b0;letter-spacing:0.164px;">Группировать</span>
<span class="t" style="left:1225.7px;top:88.0px;color:#b0b0b0;letter-spacing:0.000px;">Разгруппировать</span>
<span class="t" style="left:1225.7px;top:110.7px;color:#b0b0b0;letter-spacing:0.037px;">Повернуть</span>
<span class="t" style="left:1119.0px;top:133.8px;color:#444444;letter-spacing:0.080px;">Упорядочить</span>
<span class="t" style="left:1364.4px;top:64.7px;color:#262626;letter-spacing:-0.025px;">Найти</span>
<span class="t" style="left:1364.1px;top:88.0px;color:#262626;letter-spacing:-0.071px;">Заменить</span>
<span class="t" style="left:1364.4px;top:110.8px;color:#262626;letter-spacing:-0.257px;">Выделить</span>
<span class="t" style="left:1342.7px;top:133.8px;color:#444444;letter-spacing:-0.262px;">Редактирование</span>
<span class="t" style="left:8.7px;top:869.8px;color:#444444;letter-spacing:-0.360px;">Страница: 1 из 1</span>
<span class="t" style="left:134.7px;top:869.8px;color:#444444;letter-spacing:-0.586px;">-15,29; 1,48 см</span>
<span class="t" style="left:1449.3px;top:870.2px;color:#444444;letter-spacing:-0.867px;">57 %</span>
<span class="g" style="left:1352px;top:1.4px;font-size:14px;color:#fff;">?</span>
<span class="g" style="left:394.7px;top:72.9px;font-size:14.5px;color:#a9a9a9;-webkit-text-stroke:0.25px #a9a9a9">A</span>
<span class="g" style="left:417.6px;top:73.9px;font-size:11.5px;color:#a9a9a9;-webkit-text-stroke:0.25px #a9a9a9">A</span>
<span class="g" style="left:446.5px;top:68.6px;font-size:9.5px;color:#b3b3b3;">A</span>
<span class="g" style="left:218.6px;top:102.8px;font-size:13px;color:#ababab;font-weight:bold;-webkit-text-stroke:0.35px #ababab;transform-origin:0 0;transform:scaleX(1.08)">Ж</span>
<span class="g" style="left:243.2px;top:102.8px;font-size:13px;color:#ababab;font-weight:bold;-webkit-text-stroke:0.35px #ababab;transform-origin:0 0;font-style:italic;transform:scaleX(1.04)">К</span>
<span class="g" style="left:264.8px;top:102.8px;font-size:13px;color:#ababab;font-weight:bold;-webkit-text-stroke:0.35px #ababab;transform-origin:0 0;">Ч</span>
<span class="g" style="left:285.7px;top:102.8px;font-size:13px;color:#ababab;font-weight:bold;-webkit-text-stroke:0.35px #ababab;transform-origin:0 0;">x</span>
<span class="g" style="left:294.3px;top:107.3px;font-size:5.5px;color:#b8b8b8;font-weight:bold">2</span>
<span class="g" style="left:307.5px;top:102.8px;font-size:13px;color:#ababab;font-weight:bold;-webkit-text-stroke:0.35px #ababab;transform-origin:0 0;">x</span>
<span class="g" style="left:316.5px;top:98.7px;font-size:5.5px;color:#b8b8b8;font-weight:bold">2</span>
<span class="g" style="left:327.8px;top:102.8px;font-size:13px;color:#a9a9a9;-webkit-text-stroke:0.3px #a9a9a9">Aa</span>
<span class="g" style="left:370.3px;top:99.5px;font-size:10.8px;color:#a9a9a9;-webkit-text-stroke:0.3px #a9a9a9">AV</span>
<span class="g" style="left:415.4px;top:102.7px;font-size:14.8px;color:#a9a9a9;-webkit-text-stroke:0.3px #a9a9a9">A</span>
<span class="g" style="left:654.8px;top:72.7px;font-size:14px;color:#5e5e5e;font-weight:bold;transform:scaleX(1.15);transform-origin:0 0">¶</span>
<span class="g" style="left:516.3px;top:65.6px;font-size:5.5px;color:#b3b3b3;font-weight:bold">1</span>
<span class="g" style="left:516.3px;top:77.6px;font-size:5.5px;color:#b3b3b3;font-weight:bold">3</span>
<span class="g" style="left:696.3px;top:68.6px;font-size:30px;color:#4a7db5;font-weight:bold;-webkit-text-stroke:0.5px #4a7db5;transform:scaleX(0.9);transform-origin:0 0">A</span>
<span class="g" style="left:771.5px;top:67.7px;font-size:12px;color:#4a7db5;">A</span>
<span class="g" style="left:1345.8px;top:83.0px;font-size:10.5px;color:#555;font-weight:bold">a</span>
<span class="g" style="left:1351.6px;top:83.0px;font-size:10.5px;color:#a86bbd;font-weight:bold">b</span>
<span class="g" style="left:1351.3px;top:90.3px;font-size:10.5px;color:#555;font-weight:bold">a</span>
<span class="g" style="left:1356.9px;top:90.3px;font-size:10.5px;color:#4a78b0;font-weight:bold">c</span>
<span class="g" style="left:67.3px;top:356.2px;font-size:11px;color:#1f4a47;font-weight:bold">1</span>
<span class="rl" style="left:174px;top:162px">20</span>
<span class="rl" style="left:218px;top:162px">18</span>
<span class="rl" style="left:261px;top:162px">16</span>
<span class="rl" style="left:304px;top:162px">14</span>
<span class="rl" style="left:348px;top:162px">12</span>
<span class="rl" style="left:391px;top:162px">10</span>
<span class="rl" style="left:434px;top:162px">8</span>
<span class="rl" style="left:478px;top:162px">6</span>
<span class="rl" style="left:521px;top:162px">4</span>
<span class="rl" style="left:564px;top:162px">2</span>
<span class="rl" style="left:608px;top:162px">0</span>
<span class="rl" style="left:651px;top:162px">2</span>
<span class="rl" style="left:694px;top:162px">4</span>
<span class="rl" style="left:737px;top:162px">6</span>
<span class="rl" style="left:781px;top:162px">8</span>
<span class="rl" style="left:824px;top:162px">10</span>
<span class="rl" style="left:867px;top:162px">12</span>
<span class="rl" style="left:911px;top:162px">14</span>
<span class="rl" style="left:954px;top:162px">16</span>
<span class="rl" style="left:997px;top:162px">18</span>
<span class="rl" style="left:1041px;top:162px">20</span>
<span class="rl" style="left:1084px;top:162px">22</span>
<span class="rl" style="left:1127px;top:162px">24</span>
<span class="rl" style="left:1171px;top:162px">26</span>
<span class="rl" style="left:1214px;top:162px">28</span>
<span class="rl" style="left:1257px;top:162px">30</span>
<span class="rl" style="left:1301px;top:162px">32</span>
<span class="rl" style="left:1344px;top:162px">34</span>
<span class="rl" style="left:1387px;top:162px">36</span>
<span class="rl" style="left:1431px;top:162px">38</span>
<span class="rl" style="left:1474px;top:162px">40</span>
<span class="rl" style="left:145px;top:203px">0</span>
<span class="rl" style="left:145px;top:246px">2</span>
<span class="rl" style="left:145px;top:289px">4</span>
<span class="rl" style="left:145px;top:332px">6</span>
<span class="rl" style="left:145px;top:376px">8</span>
<span class="rl" style="left:145px;top:419px">10</span>
<span class="rl" style="left:145px;top:462px">12</span>
<span class="rl" style="left:145px;top:506px">14</span>
<span class="rl" style="left:145px;top:549px">16</span>
<span class="rl" style="left:145px;top:592px">18</span>
<span class="rl" style="left:145px;top:636px">20</span>
<span class="rl" style="left:145px;top:679px">22</span>
<span class="rl" style="left:145px;top:722px">24</span>
<span class="rl" style="left:145px;top:766px">26</span>
<span class="rl" style="left:145px;top:809px">28</span>
<span class="rl" style="left:145px;top:852px">30</span>
<svg width="1518" height="898" viewBox="0 0 1518 898"><path d="M724.6 79.2 L726 81.6 L717.300 93.300 L713.200 90.400 Z" fill="#7a7a7a" stroke="#f3f3f3" stroke-width="0.8"/><path d="M715.6 93.9 C714.6 100.6 708 102.4 700.8 101.700 C704.5 99.9 705.2 95.9 708 93.2 C710.3 91 714.9 91.4 715.6 93.9 Z" fill="#4a7db5" stroke="#f3f3f3" stroke-width="1.2"/></svg>
</div>
</body></html>
